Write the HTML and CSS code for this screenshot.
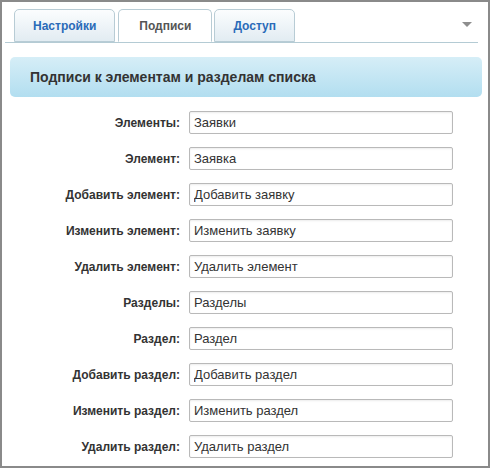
FILE: index.html
```html
<!DOCTYPE html>
<html lang="ru">
<head>
<meta charset="utf-8">
<title>Подписи</title>
<link rel="stylesheet" href="styles.css">
</head>
<body>
<div class="frame">
  <div class="tabbar">
    <div class="tabs">
      <div class="tab">Настройки</div>
      <div class="tab active">Подписи</div>
      <div class="tab">Доступ</div>
    </div>
    <span class="menu-arrow"></span>
  </div>
  <div class="section-head">Подписи к элементам и разделам списка</div>
  <div class="form">
    <label class="lbl">Элементы:</label><input class="field" type="text" value="Заявки">
    <label class="lbl">Элемент:</label><input class="field" type="text" value="Заявка">
    <label class="lbl">Добавить элемент:</label><input class="field" type="text" value="Добавить заявку">
    <label class="lbl">Изменить элемент:</label><input class="field" type="text" value="Изменить заявку">
    <label class="lbl">Удалить элемент:</label><input class="field" type="text" value="Удалить элемент">
    <label class="lbl">Разделы:</label><input class="field" type="text" value="Разделы">
    <label class="lbl">Раздел:</label><input class="field" type="text" value="Раздел">
    <label class="lbl">Добавить раздел:</label><input class="field" type="text" value="Добавить раздел">
    <label class="lbl">Изменить раздел:</label><input class="field" type="text" value="Изменить раздел">
    <label class="lbl">Удалить раздел:</label><input class="field" type="text" value="Удалить раздел">
  </div>
</div>
</body>
</html>
```
FILE: styles.css
```css
* { box-sizing: border-box; }
html, body { margin: 0; padding: 0; background: #fff; }
body { font-family: "Liberation Sans", Arial, sans-serif; color: #333; }
.frame {
  width: 490px;
  height: 468px;
  border: 2px solid #8a8a8a;
  background: #fff;
  overflow: hidden;
}
.tabbar {
  position: relative;
  margin: 8px 0 0 3px;
  width: 473px;
  border-bottom: 1px solid #b4cbd4;
  padding-left: 9px;
  height: 33px;
}
.tabs { display: flex; align-items: flex-end; height: 32px; }
.tab {
  height: 33px;
  margin-right: 2px;
  padding: 0 18px;
  border: 1px solid #b8ccd5;
  border-radius: 5px 5px 0 0;
  background: linear-gradient(#fbfdfe, #e2ecf2);
  font-size: 12px;
  font-weight: bold;
  color: #2a6bb8;
  display: flex;
  align-items: center;
  justify-content: center;
}
.tab:first-child { margin-right: 3px; }
.tab.active {
  background: #fff;
  color: #555;
  border-bottom-color: #fff;
  height: 33px;
  padding: 0 20px;
}
.menu-arrow {
  position: absolute;
  right: 6px;
  top: 12px;
  width: 0; height: 0;
  border-left: 5px solid transparent;
  border-right: 5px solid transparent;
  border-top: 5px solid #8e8e8e;
}
.section-head {
  margin: 14px 6px 0 8px;
  height: 40px;
  border-radius: 5px;
  background: linear-gradient(#d6eef7, #b2def0);
  padding-left: 20px;
  display: flex;
  align-items: center;
  font-size: 14px;
  font-weight: bold;
  color: #333;
}
.form {
  margin-top: 14px;
  display: grid;
  grid-template-columns: 178px 264px;
  column-gap: 9px;
  row-gap: 13px;
  align-items: center;
}
.lbl {
  text-align: right;
  font-size: 12px;
  font-weight: bold;
  color: #333;
}
.field {
  height: 23px;
  margin: 0;
  border: 1px solid #b9b9b9;
  border-radius: 2px;
  box-shadow: inset 0 1px 2px rgba(0,0,0,0.08);
  padding: 0 4px;
  font-family: "Liberation Sans", Arial, sans-serif;
  font-size: 13px;
  color: #333;
  background: #fff;
}
```
